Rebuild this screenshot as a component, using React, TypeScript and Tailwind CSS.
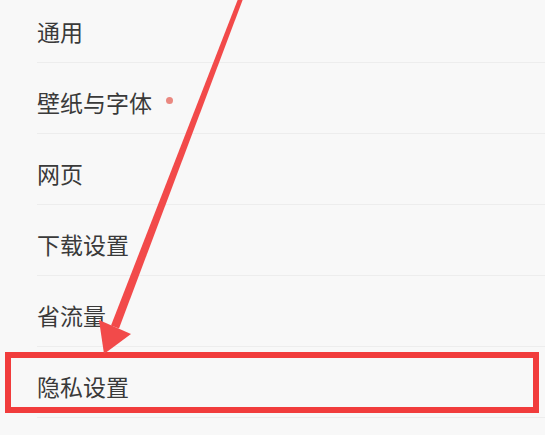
import React from 'react'
import { clsx } from 'clsx'

type Row = {
  label: string
  dot?: boolean
}

const rows: Row[] = [
  { label: '通用' },
  { label: '壁纸与字体', dot: true },
  { label: '网页' },
  { label: '下载设置' },
  { label: '省流量' },
  { label: '隐私设置' },
]

function SettingsRow({ row, first }: { row: Row; first: boolean }) {
  return (
    <div
      className={clsx(
        'flex items-end border-b border-[#ededed] pb-[19px]',
        first ? 'h-[63px]' : 'h-[71px]',
      )}
    >
      <div className="flex h-[24px] items-center">
        <span className="text-[23px] leading-[24px] text-[#3a3a3a]">{row.label}</span>
        {row.dot && <span className="ml-[14px] -mt-[4px] h-[7px] w-[7px] rounded-full bg-[#ea8880]" />}
      </div>
    </div>
  )
}

export default function App() {
  return (
    <div
      className="relative h-[435px] w-[545px] overflow-hidden bg-[#f8f8f8]"
      style={{ fontFamily: '"Noto Sans CJK SC", "Noto Sans", sans-serif' }}
    >
      {/* Settings list */}
      <div className="flex flex-col pl-[37px]">
        {rows.map((row, i) => (
          <SettingsRow key={row.label} row={row} first={i === 0} />
        ))}
      </div>

      {/* Highlight box */}
      <div className="absolute left-[5px] top-[352px] h-[61px] w-[534px] border-[6px] border-[#f13c3c]" />

      {/* Arrow */}
      <svg className="absolute left-0 top-0" width="545" height="435" viewBox="0 0 545 435">
        <polygon points="243,-1 238,-1 111,325.5 119,328.5" fill="#f24a4a" />
        <polygon points="104,354 99,320 131,334" fill="#f24a4a" />
      </svg>
    </div>
  )
}
